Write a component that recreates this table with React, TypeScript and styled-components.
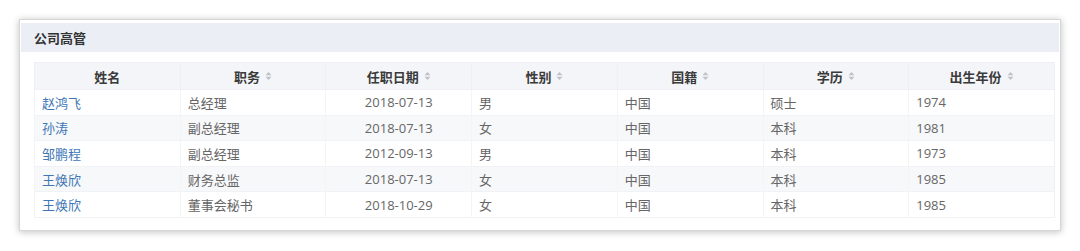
import styled, { createGlobalStyle } from "styled-components";

const GlobalStyle = createGlobalStyle`
  body {
    margin: 0;
    background: #ffffff;
    font-family: "Open Sans", "Noto Sans CJK SC", sans-serif;
  }
`;

interface IColumn {
  title: string;
  sortable: boolean;
}

interface IManager {
  name: string;
  post: string;
  date: string;
  gender: string;
  country: string;
  degree: string;
  born: string;
}

const columns: IColumn[] = [
  { title: "姓名", sortable: false },
  { title: "职务", sortable: true },
  { title: "任职日期", sortable: true },
  { title: "性别", sortable: true },
  { title: "国籍", sortable: true },
  { title: "学历", sortable: true },
  { title: "出生年份", sortable: true },
];

const managers: IManager[] = [
  { name: "赵鸿飞", post: "总经理", date: "2018-07-13", gender: "男", country: "中国", degree: "硕士", born: "1974" },
  { name: "孙涛", post: "副总经理", date: "2018-07-13", gender: "女", country: "中国", degree: "本科", born: "1981" },
  { name: "邹鹏程", post: "副总经理", date: "2012-09-13", gender: "男", country: "中国", degree: "本科", born: "1973" },
  { name: "王焕欣", post: "财务总监", date: "2018-07-13", gender: "女", country: "中国", degree: "本科", born: "1985" },
  { name: "王焕欣", post: "董事会秘书", date: "2018-10-29", gender: "女", country: "中国", degree: "本科", born: "1985" },
];

const SortIcon = () => (
  <svg width="7" height="10" viewBox="0 0 7 10">
    <path d="M3.5 1 L6.5 4.2 L0.5 4.2 Z" fill="#bfc2c7" />
    <path d="M3.5 9 L6.5 5.8 L0.5 5.8 Z" fill="#bfc2c7" />
  </svg>
);

const App = () => {
  return (
    <Page>
      <GlobalStyle />
      <Card>
        <CardHead>公司高管</CardHead>
        <Table>
          <thead>
            <tr>
              {columns.map((col) => (
                <Th key={col.title}>
                  <ThInner>
                    {col.title}
                    {col.sortable && <SortIcon />}
                  </ThInner>
                </Th>
              ))}
            </tr>
          </thead>
          <tbody>
            {managers.map((m, i) => (
              <Row key={i} striped={i % 2 === 1}>
                <Td>
                  <NameLink>{m.name}</NameLink>
                </Td>
                <Td>{m.post}</Td>
                <Td center>{m.date}</Td>
                <Td>{m.gender}</Td>
                <Td>{m.country}</Td>
                <Td>{m.degree}</Td>
                <Td>{m.born}</Td>
              </Row>
            ))}
          </tbody>
        </Table>
      </Card>
    </Page>
  );
};

const Page = styled.div`
  padding: 19px 18px 19px 19px;
`;

const Card = styled.div`
  width: 1042px;
  height: 212px;
  box-sizing: border-box;
  padding: 3px 1px 0 1px;
  background: #ffffff;
  border: 1px solid #d6d6d6;
  box-shadow: 0 1px 7px rgba(0, 0, 0, 0.25);
`;

const CardHead = styled.div`
  height: 29px;
  line-height: 29px;
  padding-left: 13px;
  background: #eceef6;
  color: #333333;
  font-family: "Noto Sans CJK SC", sans-serif;
  font-size: 13px;
  font-weight: 700;
`;

const Table = styled.table`
  width: 1021px;
  margin: 10px 0 0 13px;
  border-collapse: collapse;
  table-layout: fixed;
  font-size: 13px;
  border: 1px solid #eef0f3;
`;

const Th = styled.th`
  height: 26px;
  padding: 0;
  background: #f4f5f8;
  color: #3a3a3a;
  font-family: "Noto Sans CJK SC", sans-serif;
  font-weight: 700;
  border-left: 1px solid #eef0f3;
  border-bottom: 1px solid #eef0f3;
`;

const ThInner = styled.div`
  display: flex;
  align-items: center;
  justify-content: center;
  gap: 5px;
`;

const Row = styled.tr<{ striped: boolean }>`
  height: 25.6px;
  background: ${(props) => (props.striped ? "#f7f8fa" : "#ffffff")};
  border-bottom: 1px solid #f1f2f5;
`;

const Td = styled.td<{ center?: boolean }>`
  padding: 0 7px;
  color: #666666;
  text-align: ${(props) => (props.center ? "center" : "left")};
  border-left: 1px solid #f3f4f6;
  white-space: nowrap;
`;

const NameLink = styled.span`
  color: #3f77b6;
  cursor: pointer;
`;

export default App;
